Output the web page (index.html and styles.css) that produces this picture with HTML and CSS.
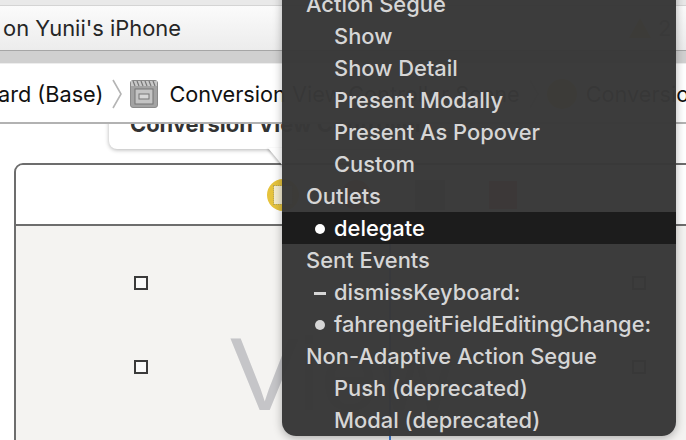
FILE: index.html
```html
<!DOCTYPE html>
<html lang="en">
<head>
<meta charset="utf-8">
<title>Outlets menu</title>
<link rel="stylesheet" href="styles.css">
</head>
<body>
<div class="window">
  <header class="toolbar">
    <span class="target">on Yunii's iPhone</span>
    <span class="status">
      <svg class="warn" width="24" height="24" viewBox="0 0 24 24"><path d="M12 2 23 22H1Z" fill="#e9c43a"/></svg>
      <span class="count">2</span>
    </span>
  </header>
  <div class="tabgap"></div>
  <nav class="jumpbar">
    <span class="crumb first">ard (Base)</span>
    <svg class="chev" width="10" height="30" viewBox="0 0 10 30"><path d="M1 1 9 15 1 29" fill="none" stroke="#b4b4b4" stroke-width="1.6"/></svg>
    <svg class="clap" width="28" height="28" viewBox="0 0 28 28">
      <rect x="0.5" y="0.5" width="27" height="27" rx="2.5" fill="#a3a3a3" stroke="#8a8a8a"/>
      <rect x="1" y="1" width="26" height="5" fill="#c9c9c9"/>
      <path d="M3 1 5 6M7 1 9 6M11 1 13 6M15 1 17 6M19 1 21 6M23 1 25 6" stroke="#777" stroke-width="1.2"/>
      <rect x="5" y="9" width="18" height="15" fill="#c4c4c4" stroke="#757575"/>
      <rect x="9" y="14" width="10" height="5" fill="#d6d6d6" stroke="#757575"/>
    </svg>
    <span class="crumb">Conversion View Controller Scene</span>
    <svg class="chev" width="10" height="30" viewBox="0 0 10 30"><path d="M1 1 9 15 1 29" fill="none" stroke="#b4b4b4" stroke-width="1.6"/></svg>
    <span class="vc-dot"></span>
    <span class="crumb">Conversion View Controller</span>
  </nav>
  <main class="canvas">
    <section class="scene">
      <div class="scene-head">
        <span class="ico-vc"><span class="ico-vc-inner"></span></span>
        <span class="ico-first"></span>
        <span class="ico-box"></span>
        <span class="ico-exit"></span>
      </div>
      <div class="scene-body">
        <span class="watermark">View</span>
        <span class="guide"></span>
        <span class="handle h1"></span>
        <span class="handle h2"></span>
        <span class="handle h3"></span>
        <span class="handle h4"></span>
      </div>
    </section>
    <div class="callout">
      <span class="callout-text">Conversion View Controller</span>
      <span class="callout-tip"></span>
    </div>
  </main>
  <div class="menu">
    <div class="row head">Action Segue</div>
    <div class="row item">Show</div>
    <div class="row item">Show Detail</div>
    <div class="row item">Present Modally</div>
    <div class="row item">Present As Popover</div>
    <div class="row item">Custom</div>
    <div class="row head">Outlets</div>
    <div class="row item active"><span class="mark dot"></span>delegate</div>
    <div class="row head">Sent Events</div>
    <div class="row item"><span class="mark dash"></span>dismissKeyboard:</div>
    <div class="row item"><span class="mark dot"></span>fahrengeitFieldEditingChange:</div>
    <div class="row head">Non-Adaptive Action Segue</div>
    <div class="row item">Push (deprecated)</div>
    <div class="row item">Modal (deprecated)</div>
  </div>
</div>
</body>
</html>
```
FILE: styles.css
```css
* { box-sizing: border-box; }
html, body { margin: 0; padding: 0; }
body { font-family: "Inter", "Liberation Sans", sans-serif; background: #fff; }

.window {
  position: relative;
  width: 686px;
  height: 440px;
  overflow: hidden;
  display: flex;
  flex-direction: column;
  background: #fff;
}

.toolbar {
  height: 46px;
  margin-top: 5px;
  flex: none;
  display: flex;
  align-items: center;
  justify-content: space-between;
  padding: 0 0 0 3px;
  background: linear-gradient(#fbfbfb, #ececec);
  border-top: 1px solid #d4d4d4;
  border-bottom: 1px solid #a6a6a6;
  box-shadow: 0 -5px 0 #e9e9e9;
  font-size: 21.9px;
  color: #262626;
}
.target { white-space: nowrap; }
.status { display: flex; align-items: center; gap: 6px; margin-right: -2px; width: 60px; }
.count { color: #666; }

.tabgap { height: 13px; flex: none; background: #d0d0d0; border-bottom: 1px solid #ededed; }

.jumpbar {
  height: 60px;
  flex: none;
  display: flex;
  align-items: center;
  padding-top: 2px;
  border-bottom: 2px solid #b2b2b2;
  background: #fff;
  white-space: nowrap;
  font-size: 21.7px;
  color: #111;
}
.crumb.first { margin-left: -2px; }
.chev { flex: none; margin-left: 9px; margin-right: 8px; }
.clap { flex: none; margin-right: 11px; }
.vc-dot { flex: none; width: 30px; height: 30px; border-radius: 50%; background: #e6c33c; margin-right: 9px; }

.canvas { position: relative; flex: 1; background: #fff; overflow: hidden; }

.callout {
  position: absolute;
  left: 109px;
  top: -20px;
  width: 300px;
  height: 45px;
  background: #fff;
  border-radius: 0 0 8px 8px;
  box-shadow: 0 1px 4px rgba(0,0,0,.3);
  padding: 7px 0 0 21px;
  font-size: 21.9px;
  font-weight: 700;
  color: #333;
  white-space: nowrap;
}
.callout-tip {
  position: absolute;
  left: 159px;
  top: 44px;
  width: 0;
  height: 0;
  border-top: 18px solid #fff;
  border-left: 15px solid transparent;
  border-right: 15px solid transparent;
  filter: drop-shadow(-1px 1px 1px rgba(0,0,0,.25));
}

.scene {
  position: absolute;
  left: 14px;
  top: 39px;
  width: 760px;
  height: 400px;
  border: 2px solid #6d6d6d;
  border-radius: 9px;
  overflow: hidden;
  display: flex;
  flex-direction: column;
  background: #f4f3f1;
}
.scene-head { position: relative; height: 61px; flex: none; background: #fff; border-bottom: 2px solid #6d6d6d; }
.ico-vc { position: absolute; left: 251px; top: 14px; width: 32px; height: 32px; border-radius: 50%; background: #e6c33c; display: flex; align-items: center; justify-content: center; }
.ico-vc-inner { width: 18px; height: 18px; background: #f3ecd0; outline: 1px dotted #b5a55c; }
.ico-first { position: absolute; left: 325px; top: 15px; width: 30px; height: 30px; border-radius: 50%; background: #d9653a; }
.ico-box { position: absolute; left: 399px; top: 15px; width: 30px; height: 30px; background: #8c8c8c; }
.ico-exit { position: absolute; left: 473px; top: 16px; width: 28px; height: 28px; background: #d9503a; }

.scene-body { position: relative; flex: 1; }
.watermark {
  position: absolute;
  left: 214px;
  top: 96px;
  font-size: 104px;
  line-height: 1;
  font-family: "Liberation Sans", sans-serif;
  color: #c5c5c8;
}
.guide { position: absolute; left: 373px; top: 0; bottom: 0; width: 2px; background: #3f7fd9; }
.handle { position: absolute; width: 14px; height: 14px; border: 2px solid #3a3a3a; background: #fafafa; }
.h1 { left: 118px; top: 50px; }
.h2 { left: 118px; top: 134px; }
.h3 { left: 616px; top: 50px; }
.h4 { left: 616px; top: 134px; }

.menu {
  position: absolute;
  z-index: 2;
  left: 282px;
  top: -12px;
  width: 394px;
  height: 448px;
  background: rgba(56,56,56,.98);
  border-radius: 0 0 14px 14px;
  box-shadow: 0 2px 10px rgba(0,0,0,.3);
  font-size: 21.9px;
  font-weight: 500;
  color: #d6d6d6;
}
.row { height: 32px; display: flex; align-items: center; white-space: nowrap; }
.row.head { padding-left: 24px; }
.row.item { padding-left: 52px; }
.row.active { background: #1c1c1c; color: #fff; }
.mark { position: absolute; }
.dot { width: 10px; height: 10px; border-radius: 50%; background: currentColor; left: 33px; margin-top: 2px; }
.dash { width: 12px; height: 3px; background: currentColor; left: 32px; margin-top: 2px; }
```
